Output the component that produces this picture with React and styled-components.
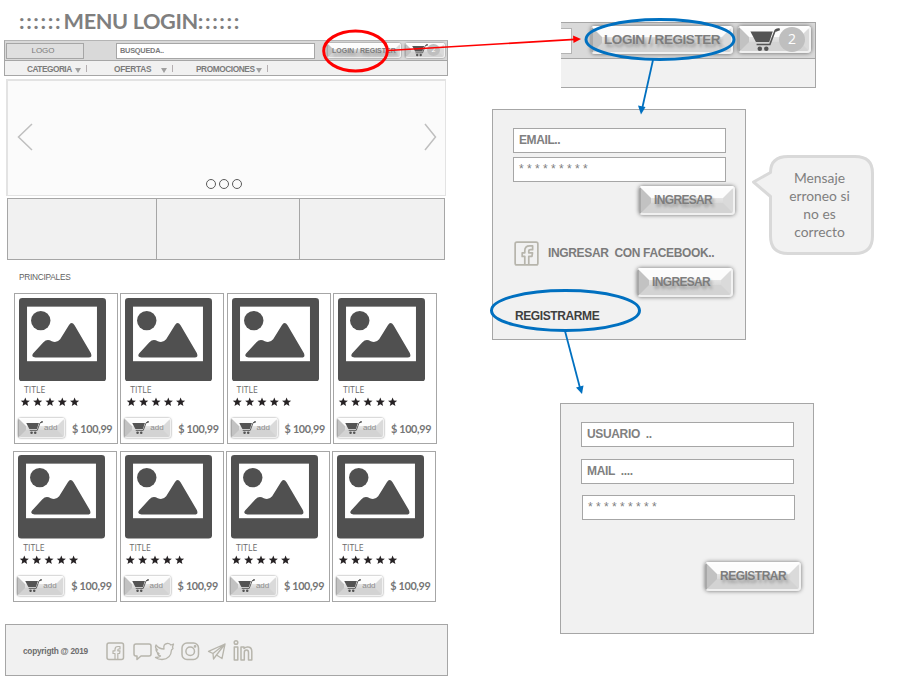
import React from "react";
import styled, { createGlobalStyle } from "styled-components";

const Global = createGlobalStyle`
  * { box-sizing: border-box; }
  html, body { margin: 0; background: #fff; overflow: hidden; }
  body { font-family: "Liberation Sans", Arial, sans-serif; color: #7b7b7b; }
`;

const Board = styled.main`
  position: relative;
  display: flex;
  width: 914px;
  height: 681px;
  background: #fff;
  overflow: hidden;
`;

/* ---------- store page ---------- */
const Store = styled.section`
  width: 448px;
  height: 681px;
  flex: none;
  display: flex;
  flex-direction: column;
`;
const Title = styled.h1`
  margin: 0;
  height: 40px;
  display: flex;
  padding: 7px 0 0 19px;
  font: 700 21.7px/28px Lato, "Open Sans", sans-serif;
  letter-spacing: -0.4px;
  color: #7f7f7f;
  white-space: nowrap;
`;
const Dots = styled.span`
  letter-spacing: 1.6px;
  margin-right: 1.5px;
`;
const TopBar = styled.header`
  margin-left: 4px;
  width: 444px;
  height: 21px;
  display: flex;
  align-items: center;
  background: #d9d9d9;
  border: 1px solid #a6a6a6;
  border-top-color: #b4b4b4;
  padding-left: 1px;
`;
const Logo = styled.div`
  width: 78px;
  height: 16px;
  border: 1px solid #a6a6a6;
  background: #dfdfdf;
  font-size: 8px;
  line-height: 13px;
  text-align: center;
  padding-right: 4px;
`;
const Search = styled.div`
  margin-left: 32px;
  width: 199px;
  height: 16px;
  border: 1px solid #a6a6a6;
  background: #fff;
  font: 700 7.4px/14px "Liberation Sans", sans-serif;
  letter-spacing: -0.25px;
  padding-left: 3px;
  margin-right: 12px;
`;
const Nav = styled.nav`
  margin-left: 4px;
  width: 444px;
  height: 15px;
  display: flex;
  align-items: center;
  background: #f1f1f1;
  border: 1px solid #a6a6a6;
  border-top: 0;
  padding: 2px 0 0 22px;
  font: 700 8.3px/12px "Liberation Sans", sans-serif;
`;
const NavItem = styled.div`
  display: flex;
  align-items: center;
  width: ${(p) => p.$w}px;
  letter-spacing: ${(p) => p.$ls}px;
  white-space: nowrap;
`;
const Caret = styled.i`
  margin: 2px 0 0 ${(p) => p.$gap}px;
  border: 3px solid transparent;
  border-top: 5px solid #a0a0a0;
  border-bottom: 0;
`;
const Bar = styled.i`
  margin: -2px 0 0 5px;
  width: 1px;
  height: 7px;
  background: #b4aeb0;
`;
const Hero = styled.div`
  margin: 3px 0 0 6px;
  width: 440px;
  height: 117px;
  border: 2px solid #e3e3e3;
  border-right-width: 1px;
  border-bottom-width: 1px;
  background: #fbfbfb;
  display: grid;
  grid-template-columns: 60px 1fr 60px;
  padding: 0 8px 5px 9px;
`;
const HeroArrow = styled.svg`
  width: 16px;
  height: 28px;
  margin-top: 42px;
  justify-self: ${(p) => p.$side};
  fill: none;
  stroke: #bfbfbf;
  stroke-width: 1.5;
`;
const HeroDots = styled.div`
  align-self: end;
  justify-self: center;
  display: flex;
  gap: 3px;
  margin: 0 7px 1px 0;
`;
const HeroDot = styled.i`
  width: 10px;
  height: 10px;
  border: 1px solid #5a5a5a;
  border-radius: 50%;
`;
const Banners = styled.div`
  margin: 2px 0 0 7px;
  width: 438px;
  height: 62px;
  display: grid;
  grid-template-columns: 149px 143px 1fr;
  border: 1px solid #a6a6a6;
`;
const Banner = styled.div`
  background: #f1f1f1;
  border-right: 1px solid #a6a6a6;
  &:last-child { border-right: 0; }
`;
const SectionLabel = styled.h2`
  margin: 11px 0 0 19px;
  height: 22px;
  font: 400 8.3px/12px "Liberation Sans", sans-serif;
  letter-spacing: -0.25px;
  color: #5f5f5f;
`;
const CardRow = styled.div`
  margin: 0 0 6.5px ${(p) => p.$left}px;
  display: flex;
  gap: 2.3px;
`;
const Card = styled.article`
  width: 104px;
  height: 151px;
  border: 1px solid #a6a6a6;
  background: #fff;
  padding: 3.5px 0 0 4px;
`;
const Picture = styled.svg`
  display: block;
  width: 87px;
  height: 83.5px;
`;
const CardTitle = styled.div`
  margin: 3px 0 0 5px;
  font: 400 8.7px/12px "Open Sans", sans-serif;
  color: #6b6b6b;
`;
const Stars = styled.svg`
  display: block;
  margin: 1px 0 0 0.5px;
  width: 60px;
  height: 10px;
  fill: #262224;
`;
const Buy = styled.div`
  display: flex;
  align-items: center;
  margin-top: 10px;
  height: 22px;
`;
const Price = styled.span`
  margin-left: 7px;
  font: 700 10.8px/16px Lato, "Open Sans", sans-serif;
  letter-spacing: -0.3px;
  color: #757575;
  white-space: nowrap;
  padding-top: 1px;
`;
const Footer = styled.footer`
  margin: 16px 0 0 5px;
  width: 443px;
  height: 52px;
  border: 1px solid #a6a6a6;
  background: #f1f1f1;
  display: flex;
  align-items: center;
  padding-left: 17px;
`;
const Copy = styled.span`
  width: 80px;
  font: 700 8.3px/12px "Liberation Sans", sans-serif;
  letter-spacing: -0.25px;
  color: #6d6d6d;
  margin-top: 2px;
`;
const Social = styled.svg`
  display: block;
  width: 150px;
  height: 24px;
  margin: 1px 0 0 2px;
  fill: none;
  stroke: #b7b5ac;
  stroke-width: 1.5;
  stroke-linejoin: round;
`;

/* ---------- bevelled button ---------- */
const Bevel = styled.button`
  appearance: none;
  position: relative;
  flex: none;
  width: ${(p) => p.$w}px;
  height: ${(p) => p.$h}px;
  margin: ${(p) => p.$m || 0};
  padding: 0 0 ${(p) => p.$pb || 0}px ${(p) => p.$pl || 0}px;
  border: 0;
  border-radius: ${(p) => (p.$h > 24 ? 4 : 3)}px;
  display: flex;
  align-items: center;
  background: linear-gradient(#fff, #cfcfcf 75%);
  box-shadow: 0 0 ${(p) => (p.$h > 24 ? 4 : 2)}px rgba(0, 0, 0, 0.55);
  color: #7d7d7d;
  font: 700 ${(p) => p.$fs || 12}px/14px "Liberation Sans", sans-serif;
  letter-spacing: ${(p) => p.$ls || 0}px;
  white-space: nowrap;
  &::before {
    content: "";
    position: absolute;
    inset: 0;
    border-radius: inherit;
    border: ${(p) => Math.floor(p.$h * 0.42)}px solid;
    border-color: #fcfcfc #dadada #d3d3d3 #c2c2c2;
  }
  &::after {
    content: "";
    position: absolute;
    inset: 0;
    border-radius: inherit;
    border: ${(p) => (p.$h > 24 ? 2 : 1)}px solid rgba(255, 255, 255, 0.65);
    border-left-color: rgba(150, 150, 150, 0.6);
  }
`;
const Caption = styled.span`
  position: relative;
  z-index: 1;
  text-shadow: 2px 3px 3px rgba(0, 0, 0, 0.25);
`;
const AddCaption = styled.span`
  position: relative;
  z-index: 1;
  margin: 0 0 0 1px;
  font: 400 8px/10px "Liberation Sans", sans-serif;
  color: #8d8d8d;
`;
const CartSvg = styled.svg`
  position: relative;
  z-index: 1;
  flex: none;
  width: ${(p) => p.$w}px;
  height: ${(p) => p.$w * 0.8}px;
`;
const Count = styled.span`
  position: relative;
  z-index: 1;
  width: ${(p) => p.$d}px;
  height: ${(p) => p.$d - 1}px;
  margin: 0 0 1px -1px;
  border-radius: 50%;
  background: #bfbfbf;
  color: #fff;
  text-align: center;
  font: 400 ${(p) => p.$d * 0.54}px/${(p) => p.$d - 2}px "Open Sans", sans-serif;
`;

/* ---------- flow on the right ---------- */
const Flow = styled.section`
  flex: 1;
  display: flex;
  flex-direction: column;
`;
const Detail = styled.div`
  margin: 22px 0 0 113px;
  width: 255px;
  height: 66px;
  background: #f1f1f1;
  border: solid #a6a6a6;
  border-width: 1px 1px 1px 0;
`;
const DetailBar = styled.div`
  height: 36px;
  display: flex;
  align-items: flex-start;
  background: #d9d9d9;
  border-bottom: 1px solid #a6a6a6;
  padding-top: 3px;
`;
const DetailSearch = styled.div`
  margin: 2px 19px 0 0;
  width: 11px;
  height: 26px;
  background: #fff;
  border: 1px solid #b4b4b4;
  border-left: 0;
`;
const LoginRow = styled.div`
  display: flex;
  margin: 21px 0 0 44px;
`;
const Panel = styled.div`
  width: 254px;
  height: 231px;
  flex: none;
  border: 1px solid #a6a6a6;
  background: #f1f1f1;
  margin: ${(p) => p.$m || 0};
  padding: 18px 0 0 20px;
`;
const Field = styled.div`
  width: 213px;
  height: 25px;
  margin: ${(p) => p.$m || 0};
  border: 1px solid #a6a6a6;
  background: #fff;
  padding-left: 5px;
  font: ${(p) => p.$weight || 700} 12px/22px "Liberation Sans", sans-serif;
  letter-spacing: ${(p) => p.$ls || 0}px;
  color: #808080;
  white-space: pre;
`;
const FacebookRow = styled.div`
  display: flex;
  align-items: center;
  margin: 25px 0 0 1px;
  height: 26px;
  gap: 9px;
  font: 700 12px/14px "Liberation Sans", sans-serif;
  letter-spacing: -0.35px;
  white-space: pre;
`;
const FacebookIcon = styled.svg`
  width: 25px;
  height: 25px;
  fill: none;
  stroke: #b7b5ac;
  stroke-width: 1.5;
  stroke-linejoin: round;
`;
const RegisterLink = styled.div`
  margin: 12px 0 0 2px;
  font: 700 12px/14px "Liberation Sans", sans-serif;
  letter-spacing: -0.4px;
  color: #3f3f3f;
`;
const Callout = styled.div`
  position: relative;
  isolation: isolate;
  width: 124px;
  height: 102px;
  margin: 45px 0 0 5px;
  padding: 15px 0 0 13px;
  text-align: center;
  font: 400 13.8px/18px Lato, "Open Sans", sans-serif;
  color: #7f7f7f;
`;
const Bubble = styled.svg`
  position: absolute;
  inset: 0;
  z-index: -1;
`;
const CalloutText = styled.div`
  padding: 0 14px;
  white-space: nowrap;
`;
const Marks = styled.svg`
  position: absolute;
  inset: 0;
  z-index: 5;
  pointer-events: none;
  fill: none;
`;

const Cart = ({ w }) => (
  <CartSvg $w={w} viewBox="0 0 92 74" fill="#545454">
    <path d="M1 11H70L59 43H18Z" />
    <path d="M91 4Q80 2 76 11L61 51H20" fill="none" stroke="#545454" strokeWidth="5" />
    <path d="M79 9L91 4" stroke="#545454" strokeWidth="6" />
    <circle cx="30" cy="64" r="7" />
    <circle cx="50" cy="64" r="7" />
  </CartSvg>
);

const starPath = (cx) => {
  const pts = [];
  for (let i = 0; i < 10; i++) {
    const r = i % 2 ? 2.1 : 4.8;
    const a = -Math.PI / 2 + (i * Math.PI) / 5;
    pts.push(`${(cx + r * Math.cos(a)).toFixed(2)} ${(5.2 + r * Math.sin(a)).toFixed(2)}`);
  }
  return `M${pts.join("L")}Z`;
};

const Product = () => (
  <Card>
    <Picture viewBox="0 0 260 251" preserveAspectRatio="none">
      <rect width="260" height="251" rx="10" fill="#505050" />
      <rect x="24" y="26" width="209" height="164" fill="#fff" />
      <circle cx="65" cy="68" r="29" fill="#505050" />
      <path
        fill="#505050"
        d="M42 167L73 133Q84 121 98 130Q112 137 123 124L149 82Q157 69 166 82L215 166Q220 179 208 179H49Q35 177 42 167Z"
      />
    </Picture>
    <CardTitle>TITLE</CardTitle>
    <Stars viewBox="0 0 60 10">
      {[5.3, 17.7, 30, 42.3, 54.6].map((x) => <path key={x} d={starPath(x)} />)}
    </Stars>
    <Buy>
      <Bevel $w={47} $h={20} $pl={8} $m="0 0 0 -1px">
        <Cart w={17} />
        <AddCaption>add</AddCaption>
      </Bevel>
      <Price>$ 100,99</Price>
    </Buy>
  </Card>
);

const FB_F = "M9.5 20.2V13.6H7.2V10.4H9.5V8.6Q9.5 4.3 13.8 4.3H16.4V7.6H14.6Q13 7.6 13 9V10.4H16.3L15.8 13.6H13V20.2";

export default function App() {
  return (
    <>
      <Global />
      <Board>
        <Store>
          <Title><Dots>::::::</Dots>MENU LOGIN<Dots>::::::</Dots></Title>
          <TopBar>
            <Logo>LOGO</Logo>
            <Search>BUSQUEDA..</Search>
            <Bevel $w={74} $h={15} $pl={5} $fs={7}><Caption>LOGIN / REGISTER</Caption></Bevel>
            <Bevel $w={40} $h={15} $pl={7} $m="0 0 0 4px">
              <Cart w={16} />
              <Count $d={13}>2</Count>
            </Bevel>
          </TopBar>
          <Nav>
            <NavItem $w={87} $ls={-0.5}>CATEGORIA<Caret $gap={3} /><Bar /></NavItem>
            <NavItem $w={82} $ls={-0.25}>OFERTAS<Caret $gap={10} /><Bar /></NavItem>
            <NavItem $w={90} $ls={-0.42}>PROMOCIONES<Caret $gap={1} /><Bar /></NavItem>
          </Nav>
          <Hero>
            <HeroArrow $side="start" viewBox="0 0 16 28"><path d="M15 1L1.5 14L15 27" /></HeroArrow>
            <HeroDots><HeroDot /><HeroDot /><HeroDot /></HeroDots>
            <HeroArrow $side="end" viewBox="0 0 16 28"><path d="M4 1L14.5 14L4 27" /></HeroArrow>
          </Hero>
          <Banners><Banner /><Banner /><Banner /></Banners>
          <SectionLabel>PRINCIPALES</SectionLabel>
          <CardRow $left={14}><Product /><Product /><Product /><Product /></CardRow>
          <CardRow $left={13.3}><Product /><Product /><Product /><Product /></CardRow>
          <Footer>
            <Copy>copyrigth @ 2019</Copy>
            <Social viewBox="0 0 150 24">
              <g transform="translate(1 3)">
                <rect x="1" y="1" width="16.5" height="16.5" rx="2" />
                <path d="M9 17.5V11.5H7V8.8H9V7.5Q9 4.5 12 4.5H14V7H12.7Q11.8 7 11.8 8V8.8H14L13.6 11.5H11.8V17.5" strokeWidth="1.2" />
              </g>
              <path d="M31 5H44Q46 5 46 7V15Q46 17 44 17H36L32 20.5V17H31Q29 17 29 15V7Q29 5 31 5Z" />
              <path d="M51 6Q54 10 59 10Q58 5 62 4.5Q64 4 66 6L68.5 5L67.5 8L68 9.5L66.5 11Q66 20 57 20.5Q53 20.5 50.5 18.5Q54 18.5 55.5 17Q53 16.5 52.5 14.5H54Q51 13 51 10.5L52.5 11Q49.5 8.5 51 6Z" strokeWidth="1.3" />
              <g>
                <rect x="77" y="4" width="16.5" height="16.5" rx="5" />
                <circle cx="85.2" cy="12.3" r="4.3" />
                <circle cx="90" cy="7.4" r=".6" />
              </g>
              <path d="M103.5 12.3L120 5L117 19.5L111.5 16L108.5 20L108 14.5ZM108 14.5L120 5L111.5 16" strokeWidth="1.3" />
              <g strokeWidth="1.5">
                <circle cx="131" cy="3.5" r="1.8" />
                <rect x="129.3" y="8" width="3.5" height="13" />
                <path d="M136 21V8H139V9.5Q141 7.5 143.5 8Q146.8 8.5 146.8 12.5V21H143.5V13.5Q143.5 11 141.5 11Q139.3 11 139.3 13.5V21Z" />
              </g>
            </Social>
          </Footer>
        </Store>

        <Flow>
          <Detail>
            <DetailBar>
              <DetailSearch />
              <Bevel $w={142} $h={28} $pl={13} $fs={13.5} $ls={-0.43}><Caption>LOGIN / REGISTER</Caption></Bevel>
              <Bevel $w={73} $h={27} $pl={12} $m="0 0 0 5px">
                <Cart w={30} />
                <Count $d={26}>2</Count>
              </Bevel>
            </DetailBar>
          </Detail>
          <LoginRow>
            <Panel>
              <Field $ls={-0.4}>EMAIL..</Field>
              <Field $m="4px 0 0" $weight={400}>* * * * * * * * *</Field>
              <Bevel $w={96} $h={29} $pl={15} $pb={2} $ls={-0.65} $m="4px 0 0 126px"><Caption>INGRESAR</Caption></Bevel>
              <FacebookRow>
                <FacebookIcon viewBox="0 0 22 22">
                  <rect x="1" y="1" width="20" height="20" rx="1.5" />
                  <path d={FB_F} />
                </FacebookIcon>
                {"INGRESAR  CON FACEBOOK.."}
              </FacebookRow>
              <Bevel $w={96} $h={29} $pl={15} $pb={2} $ls={-0.65} $m="2px 0 0 124px"><Caption>INGRESAR</Caption></Bevel>
              <RegisterLink>REGISTRARME</RegisterLink>
            </Panel>
            <Callout>
              <Bubble width="124" height="102" viewBox="0 0 124 102">
                <path
                  d="M37 2.5H104Q121.5 2.5 121.5 19V82Q121.5 99.5 104 99.5H37Q19.500 99.500 19.500 82V42.500L2.500 28L19.500 18.500Q19.500 2.500 37 2.500Z"
                  fill="#f2f2f2" stroke="#d9d9d9" strokeWidth="3" strokeLinejoin="round"
                />
              </Bubble>
              <CalloutText>Mensaje<br />erroneo si<br />no es<br />correcto</CalloutText>
            </Callout>
          </LoginRow>
          <Panel $m="63px 0 0 112px">
            <Field $ls={-0.35}>{"USUARIO  .."}</Field>
            <Field $m="12px 0 0" $ls={-0.35}>{"MAIL  ...."}</Field>
            <Field $m="11px 0 0 1px" $weight={400}>* * * * * * * * *</Field>
            <Bevel $w={96} $h={29} $pl={15} $pb={2} $ls={-0.5} $m="42px 0 0 124px"><Caption>REGISTRAR</Caption></Bevel>
          </Panel>
        </Flow>

        <Marks width="914" height="681" viewBox="0 0 914 681">
          <g stroke="#f00">
            <ellipse cx="355.5" cy="51" rx="31.8" ry="20" strokeWidth="3" />
            <path d="M388 50.5L575 39.4" strokeWidth="1.7" />
            <path d="M573 35.5L581 39L573.5 43Z" fill="#f00" stroke="none" />
          </g>
          <g stroke="#0070c0">
            <ellipse cx="660" cy="39.5" rx="74" ry="20" strokeWidth="3" />
            <path d="M653 60L642.5 107" strokeWidth="1.8" />
            <path d="M638 105.5L645.5 107L641 114.5Z" fill="#0070c0" stroke="none" />
            <ellipse cx="565.5" cy="310.5" rx="74" ry="20" strokeWidth="3" />
            <path d="M565 331L580 388" strokeWidth="1.8" />
            <path d="M576 387.5L583.5 385.5L582 394Z" fill="#0070c0" stroke="none" />
          </g>
        </Marks>
      </Board>
    </>
  );
}
